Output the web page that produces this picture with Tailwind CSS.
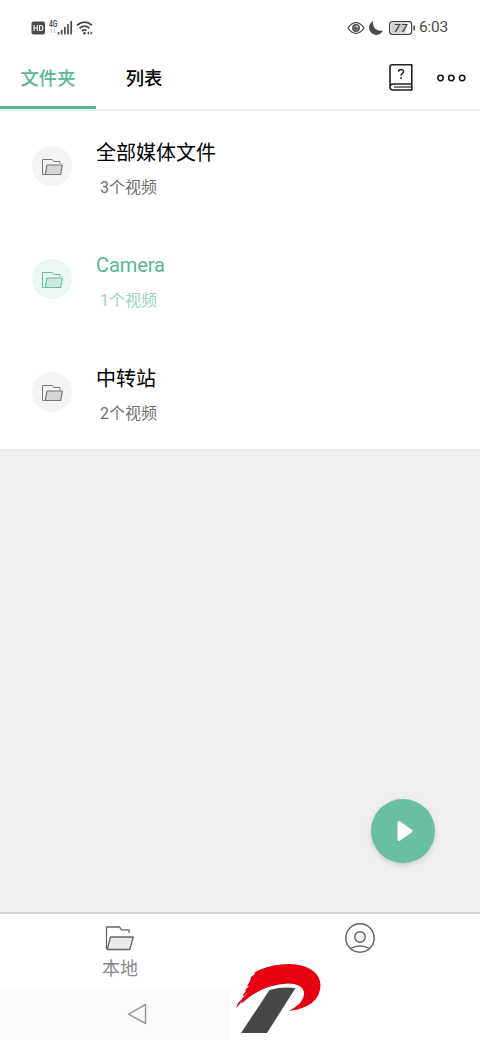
<!DOCTYPE html>
<html lang="zh-CN">
<head>
<meta charset="utf-8">
<title>文件夹</title>
<script src="https://cdn.jsdelivr.net/npm/@tailwindcss/browser@4"></script>
</head>
<body class="bg-white">
<svg class="hidden">
  <symbol id="folder" viewBox="0 0 30 26">
    <path d="M1.500 24.500V2H14.500L16.500 4.800H24V8" fill="none" stroke="currentColor" stroke-width="1.3"/>
    <path d="M5.500 12H28.200L24.800 24.500H2.300Z" fill="currentColor" fill-opacity=".13" stroke="currentColor" stroke-width="1.3" stroke-linejoin="round"/>
  </symbol>
  <symbol id="folder-small" viewBox="0 0 22 18">
    <path d="M3.800 16.500H1.500V1.500H11.200L12.800 3.500H19V6" fill="none" stroke="currentColor" stroke-width="1"/>
    <path d="M6 7H21.300L19.700 16.500H4.200Z" fill="currentColor" fill-opacity=".25" stroke="currentColor" stroke-width="1.2" stroke-linejoin="round"/>
  </symbol>
</svg>
<div class="flex h-[1040px] w-[480px] flex-col overflow-hidden font-['Roboto','Noto_Sans_CJK_SC',sans-serif]">
  <div class="flex h-[55px] items-center pr-[31px] pl-[31px] text-[#4a4a4a]">
    <svg class="h-5 w-[62px]" viewBox="0 0 62 20" fill="none">
      <rect x=".5" y="3.500" width="13.500" height="13" rx="2" fill="#4a4a4a"/>
      <path d="M3 7v6M6.300 7v6M3 10h3.300M8.600 7.500v5h1.400q1.900 0 1.900-2.500t-1.900-2.500z" stroke="#fff" stroke-width="1.100"/>
      <text x="18" y="8.500" font-size="8.500" font-weight="600" fill="#4a4a4a" textLength="8.500" lengthAdjust="spacingAndGlyphs">4G</text>
      <path d="M20.500 15v-4l-1 1M23.500 11v4l1-1" stroke="#bbb" stroke-width=".8"/>
      <path d="M27.500 14v2.500M30.700 12v4.500M33.900 9v7.500M37 6v10.500M40.200 3v13.500" stroke="#4a4a4a" stroke-width="1.700"/>
      <path d="M46 7.300Q53.500 1 61 7.300M48.500 10.300Q53.500 6 58.500 10.300M51 13q2.500-2 4.500-.4" stroke="#4a4a4a" stroke-width="1.800"/>
      <circle cx="53.500" cy="15.200" r="1.300" fill="#4a4a4a"/>
      <path d="M58 13.200L56 15l2 1.800zM59.500 13.200l2 1.800-2 1.800z" fill="#4a4a4a"/>
    </svg>
    <svg class="ml-auto h-5 w-[69px]" viewBox="0 0 69 20" fill="none">
      <path d="M1 10Q4.500 4.700 9 4.700T17 10Q13.500 15.300 9 15.300T1 10Z" stroke="#4a4a4a" stroke-width="1.300"/>
      <circle cx="9" cy="10" r="3.300" fill="#888" stroke="#4a4a4a" stroke-width="1.300"/><circle cx="9" cy="10" r="1.500" fill="#4a4a4a"/><circle cx="10" cy="8.600" r=".9" fill="#fff"/>
      <path d="M26.300 3A7.300 7.300 0 1 0 36 12.600Q31.500 13.500 28 10.800Q25 7.500 26.300 3Z" fill="#4a4a4a"/>
      <rect x="42.600" y="3.600" width="22" height="12.800" rx="2.800" stroke="#4a4a4a" stroke-width="1.300"/>
      <rect x="44.300" y="5.300" width="15" height="9.400" rx="1" fill="#cfcfcf"/>
      <path d="M67.200 7.500v5" stroke="#4a4a4a" stroke-width="1.500"/>
      <text x="46.800" y="14" font-size="11.500" font-weight="500" font-style="italic" fill="#3f3f3f" textLength="13.500">77</text>
    </svg>
    <span class="mt-px ml-[3px] w-[30px] text-[15.5px] tracking-[-0.2px] whitespace-nowrap">6:03</span>
  </div>
  <div class="flex h-[56px] border-b-2 border-[#efefef]">
    <div class="flex h-[54px] w-24 justify-center border-b-[3px] border-[#57b696] pt-[10px] text-[18.3px] leading-7 font-medium text-[#57b696]">文件夹</div>
    <div class="w-24 pt-[10px] text-center text-[18.3px] leading-7 font-medium text-black">列表</div>
    <svg class="mt-2 mr-[23px] ml-auto h-7 w-6" viewBox="0 0 24 28" fill="none" stroke="#222">
      <path d="M22.800 21V1.800H3Q1 1.800 1 4V24Q1 27 4 27H22.800V21H4Q1 21 1 24" stroke-width="1.600" stroke-linejoin="round"/>
      <path d="M5 24H22" stroke-width="1.200"/>
      <path d="M9.500 8.700Q9.700 6.500 12 6.500T14.500 8.500Q14.500 9.700 13.200 10.600T12 12.700" stroke-width="1.500"/>
      <circle cx="12" cy="15" r=".9" fill="#222" stroke="none"/>
    </svg>
    <svg class="mt-[18px] mr-[13px] h-[10px] w-[31px]" viewBox="0 0 31 10" fill="none" stroke="#111" stroke-width="1.500">
      <circle cx="4.500" cy="5" r="2.700"/><circle cx="15.300" cy="5" r="2.700"/><circle cx="26.100" cy="5" r="2.700"/>
    </svg>
  </div>
  <div class="h-[338px]">
    <div class="flex h-[113px] items-start pl-8">
      <div class="mt-[35px] flex size-10 items-center justify-center rounded-full bg-[#f4f4f4] text-[#777]"><svg class="mt-px h-[18px] w-[22px]"><use href="#folder-small"/></svg></div>
      <div class="ml-6 pt-[26px]"><div class="text-[20px] leading-8 text-black">全部媒体文件</div><div class="mt-[7px] ml-1 text-[16px] leading-6 text-[#707070]">3个视频</div></div>
    </div>
    <div class="flex h-[113px] items-start pl-8">
      <div class="mt-[35px] flex size-10 items-center justify-center rounded-full bg-[#eaf7f4] text-[#6abf9f]"><svg class="mt-px h-[18px] w-[22px]"><use href="#folder-small"/></svg></div>
      <div class="ml-6 pt-[25px]"><div class="text-[20px] leading-8 tracking-[-0.1px] text-[#57b696]">Camera</div><div class="mt-2 ml-1 text-[16px] leading-6 text-[#98d4bf]">1个视频</div></div>
    </div>
    <div class="flex h-[112px] items-start pl-8">
      <div class="mt-[35px] flex size-10 items-center justify-center rounded-full bg-[#f4f4f4] text-[#777]"><svg class="mt-px h-[18px] w-[22px]"><use href="#folder-small"/></svg></div>
      <div class="ml-6 pt-[26px]"><div class="text-[20px] leading-8 text-black">中转站</div><div class="mt-[7px] ml-1 text-[16px] leading-6 text-[#707070]">2个视频</div></div>
    </div>
  </div>
  <div class="flex h-[463px] items-end justify-end border-t border-[#e6e6e6] bg-[#efefef] pr-[45px] pb-[49px]">
    <button class="flex size-16 items-center justify-center rounded-full bg-[#68bfa2] shadow-[0_2px_5px_rgba(0,0,0,0.15)]">
      <svg class="ml-1 h-6 w-5" viewBox="0 0 20 24"><path d="M4 3.500L16 12L4 20.500Z" fill="#fff" stroke="#fff" stroke-width="3" stroke-linejoin="round"/></svg>
    </button>
  </div>
  <div class="grid h-[76px] grid-cols-2 border-t-2 border-[#d4d4d4] bg-white">
    <div class="flex flex-col items-center pt-[11px] text-[#666]">
      <svg class="h-[26px] w-[30px]"><use href="#folder"/></svg>
      <span class="mt-1 text-[18px] leading-7 text-[#888]">本地</span>
    </div>
    <div class="flex justify-center pt-[8px]">
      <svg class="size-8" viewBox="0 0 32 32" fill="none" stroke="#606060" stroke-width="1.400">
        <circle cx="16" cy="16" r="14.200"/><circle cx="16" cy="15" r="5.200" fill="#f1f1f1"/>
        <path d="M6.500 26.500Q16 21.500 25.500 26.500"/>
      </svg>
    </div>
  </div>
  <div class="relative flex h-[52px] bg-white">
    <div class="h-full w-[230px] bg-[#fbfbfb] pt-[15px] pl-[127px]">
      <svg class="h-[22px] w-5" viewBox="0 0 20 22"><path d="M18.500 1.500V20.500L1.700 11.200Z" fill="none" stroke="#999" stroke-width="1.500" stroke-linejoin="round"/></svg>
    </div>
    <svg class="absolute bottom-0 left-[230px] h-[80px] w-[100px]" viewBox="230 960 100 80">
      <path d="M236 1008L238 1003L237 1004L242 999L244 995L242 996L246 991L245 990L249 986L247 986L250 981L251 977L255 974L254 973L259 970Q274 963.500 291 964Q319 966 320.500 985Q320 1007 289 1011Q304 1003 304 994Q304 984 288 983.500Q266 984.500 248 998L241 1004L242 1001L238 1006Z" fill="#e60012"/>
      <path d="M243 998L247 993" stroke="#fff" stroke-width=".5"/>
      <path d="M269.500 990Q282 986.500 295.500 988L267 1033H241Z" fill="#474747"/>
    </svg>
  </div>
</div>
</body>
</html>
